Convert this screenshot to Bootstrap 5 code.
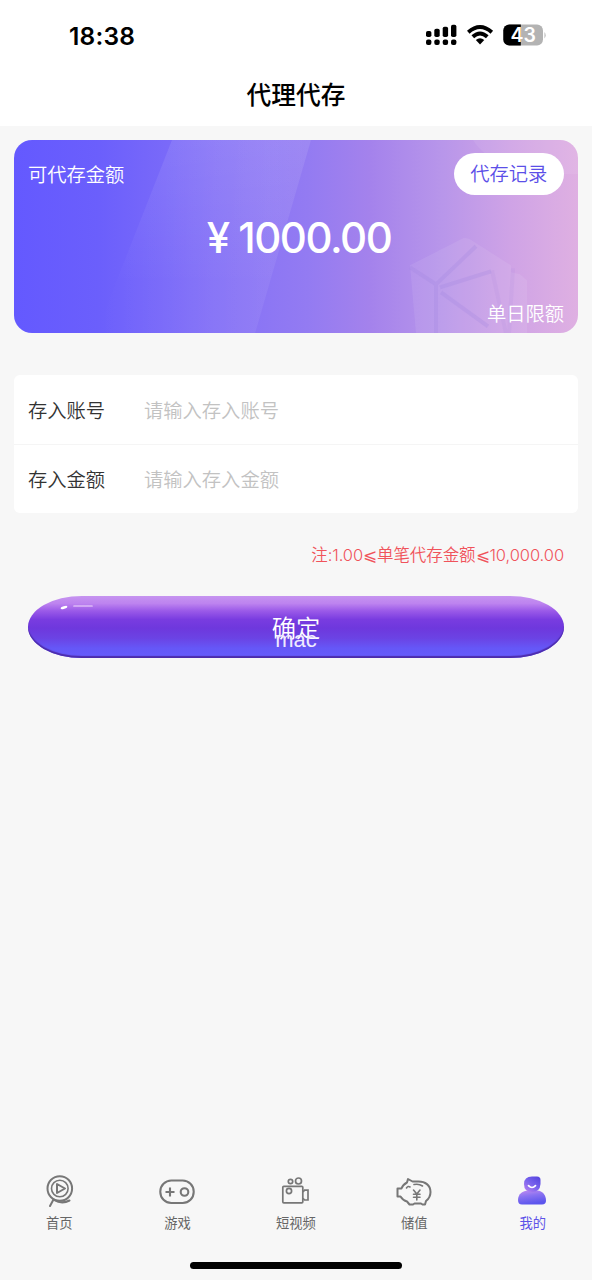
<!DOCTYPE html>
<html lang="zh-CN">
<head>
<meta charset="utf-8">
<meta name="viewport" content="width=device-width, initial-scale=1">
<title>代理代存</title>
<link href="https://cdn.jsdelivr.net/npm/bootstrap@5.3.0/dist/css/bootstrap.min.css" rel="stylesheet">
<style>
body{font-family:Inter,"Noto Sans CJK SC",sans-serif;background:#f7f7f7;color:#333;font-size:19.3px;line-height:28px;font-weight:350}
.screen{height:1280px;overflow:hidden}
.statusbar{height:70px;padding:2px 46px 0 69px}
.statusbar svg{margin-top:-2px}
.clock{font-size:24.5px;font-weight:600;color:#000;letter-spacing:.2px}
.topbar{height:56px;padding-bottom:4px;font-size:24.7px;font-weight:500;color:#000}
.balance{height:193.500px;margin:13.500px 14px 0;border-radius:18px;color:#fff;padding:13.500px 14px 5px;background:linear-gradient(90deg,#6459ff 0%,#6b5ffc 15%,#8370f7 35%,#937bf2 52%,#a482ec 63%,#b896ea 76%,#cfa3e6 88%,#dfb0e2 100%)}
.caption-row{padding-top:2px}
.art{position:absolute;inset:0;width:100%;height:100%}
.records{background:#fff;color:#5b4fe8;width:110.500px;height:41.500px;border-radius:21px;font-size:19.3px;font-weight:350;line-height:43px}
.amount{font-size:42px;line-height:50px;font-weight:500;letter-spacing:-1.5px;padding:0 0 11px 6px}
.fields{margin:42px 14px 0;border-radius:6px;height:138px}
.fields .line{height:69px;padding:2px 14px 0}
.fields .line+.line{border-top:1px solid #f5f5f5}
.fields label{width:116px}
.fields input{font-size:19.3px;font-weight:350;height:40px;background:none;outline:0}
.fields input::placeholder{color:#c2c2c2;opacity:1}
.limit{margin:29px 28px 0;font-size:16.5px;line-height:27px;letter-spacing:-.08px;color:#f0535b}
.submit{margin:27px 28px 0;height:62px;border:0;border-radius:54px/31px;color:#fff;font-size:24.3px;font-weight:350;background:linear-gradient(#c694f0 0%,#bd83ef 12%,#9b5ae8 24%,#793ce0 38%,#6e38dd 52%,#6b43e4 68%,#6557f7 84%,#665dfc 100%);box-shadow:inset 0 -2px 1px #4d2cac}
.submit .word{padding-top:2px}
.shine{position:absolute;left:31px;top:6px}
.brand{position:absolute;left:0;right:0;top:31px;font:22px/26px "Liberation Sans",sans-serif;color:#efeaff}
.tabs{height:120px;padding-top:12px}
.tabs a{font-size:13.3px;line-height:20px;font-weight:400;color:#666;text-decoration:none}
.tabs svg{display:block;margin:0 1px 3px 0}
.tabs a.current{color:#5d52e8}
.homebar{width:212px;height:7px;border-radius:4px;background:#000;position:absolute;left:190px;bottom:11px}
</style>
</head>
<body>
<div class="screen d-flex flex-column position-relative">
<header class="bg-white">
  <div class="statusbar d-flex align-items-center justify-content-between">
    <span class="clock">18:38</span>
    <svg width="122" height="26" viewBox="0 0 122 26">
      <g><rect x="2" y="9" width="5.4" height="6" rx="1.8"/><rect x="10.3" y="6.7" width="5.4" height="8.3" rx="1.8"/><rect x="18.7" y="4.7" width="5.4" height="10.3" rx="1.8"/><rect x="27" y="2.7" width="5.4" height="12.3" rx="1.8"/>
      <rect x="2" y="17.6" width="5.4" height="5.4" rx="2"/><rect x="10.3" y="17.6" width="5.4" height="5.4" rx="2"/><rect x="18.7" y="17.6" width="5.4" height="5.4" rx="2"/><rect x="27" y="17.6" width="5.4" height="5.4" rx="2"/></g>
      <g fill="none" stroke="#000" stroke-width="3.9"><path d="M44.3 10.2Q56 -.2 67.8 10.2"/><path d="M48.8 14.8Q56 8.2 63.3 14.8"/></g>
      <path d="M51.8 18.1Q56 14.6 60.3 18.1L56 22.4Z"/>
      <rect x="79.3" y="2.5" width="39.7" height="21" rx="6" fill="#b3b3b3"/><path d="M85.3 2.5H96.8V23.5H85.3a6 6 0 0 1-6-6V8.500a6 6 0 0 1 6-6Z"/>
      <path d="M120.500 10q2.200 3.200 0 6.500Z" fill="#b3b3b3"/>
      <text x="99.200" y="19.900" text-anchor="middle" font-size="19.500" font-weight="600" fill="#fff">43</text>
    </svg>
  </div>
  <h1 class="topbar m-0 d-flex align-items-center justify-content-center">代理代存</h1>
</header>
<section class="balance position-relative overflow-hidden d-flex flex-column justify-content-between">
  <svg class="art" viewBox="0 0 564 193" preserveAspectRatio="none">
    <defs><linearGradient id="beam" x1="0" y1="0" x2="0" y2="1"><stop stop-color="#fff" stop-opacity=".07"/><stop offset=".75" stop-color="#fff" stop-opacity="0"/></linearGradient>
    <linearGradient id="beam2" x1="0" x2="1"><stop stop-color="#fff" stop-opacity="0"/><stop offset=".8" stop-color="#fff" stop-opacity=".06"/><stop offset="1" stop-color="#fff" stop-opacity=".03"/></linearGradient></defs>
    <path d="M158 0H297L241 193H82Z" fill="url(#beam)"/><path d="M158 0H297L241 193H82Z" fill="url(#beam2)"/>
    <path d="M459 0Q480 35 564 34V0Z" fill="#fff" opacity=".07"/>
    <path d="M396 125L449 98Q454 97 459 101L497 125V132L506 134 513 140V193H402Z" fill="#fff" opacity=".08"/>
    <g fill="none" stroke="#a183e0" stroke-opacity=".25" stroke-width="4"><path d="M396 127L422 144V193M422 144L462 106M426 147L477 131M427 152L474 186"/><path d="M478 130L492 193M499 128L495 193" stroke-opacity=".12"/></g>
  </svg>
  <div class="d-flex justify-content-between align-items-center position-relative"><span class="caption-row">可代存金额</span><button class="btn records p-0 border-0">代存记录</button></div>
  <div class="amount text-center position-relative">¥ 1000.00</div>
  <div class="text-end position-relative mt-2">单日限额</div>
</section>
<form class="fields bg-white">
  <div class="line d-flex align-items-center"><label for="acct">存入账号</label><input id="acct" class="border-0 p-0 flex-grow-1" placeholder="请输入存入账号"></div>
  <div class="line d-flex align-items-center"><label for="sum">存入金额</label><input id="sum" class="border-0 p-0 flex-grow-1" placeholder="请输入存入金额"></div>
</form>
<div class="limit text-end">注:1.00⩽单笔代存金额⩽10,000.00</div>
<button class="submit position-relative p-0"><span class="word d-block">确定</span>
  <svg class="shine" width="38" height="10"><ellipse cx="5" cy="5.500" rx="3.500" ry="1.300" fill="#fff" transform="rotate(-18 5 5.500)"/><path d="M15 4H33" stroke="#dcb9f7" stroke-width="1.700" stroke-linecap="round"/></svg>
  <span class="brand">mac</span>
</button>
<nav class="tabs mt-auto row row-cols-5 g-0 text-center">
  <a class="col d-flex flex-column align-items-center" href="#"><svg width="36" height="38" viewBox="0 0 36 38" fill="none" stroke="#777" stroke-width="2" stroke-linecap="round"><circle cx="18.800" cy="16.500" r="12.300"/><circle cx="18.800" cy="16.500" r="8.300" stroke-width="1.600"/><path d="M16 12V21L24 16.500Z" stroke-linejoin="round"/><path d="M12.500 27.500L9 34M13 28Q21 32.500 28.500 28.500"/></svg>首页</a>
  <a class="col d-flex flex-column align-items-center" href="#"><svg width="36" height="38" viewBox="0 0 36 38" fill="none" stroke="#777" stroke-width="2.100"><rect x="1.300" y="8.500" width="33.400" height="22.500" rx="11"/><path d="M6.500 20H15.500M11 15.500V24.500"/><circle cx="25.500" cy="20" r="3.800"/></svg>游戏</a>
  <a class="col d-flex flex-column align-items-center" href="#"><svg width="36" height="38" viewBox="0 0 36 38" fill="none" stroke="#777" stroke-width="1.700"><rect x="5.800" y="14.300" width="20" height="16.500" rx="1"/><circle cx="13.500" cy="9.500" r="2.200"/><circle cx="21.500" cy="9" r="3"/><circle cx="12" cy="19" r="2.600"/><path d="M26 20L27.500 18.200H31V28H27.500L26 26.300"/></svg>短视频</a>
  <a class="col d-flex flex-column align-items-center" href="#"><svg width="36" height="38" viewBox="0 0 36 38" fill="none" stroke="#777" stroke-width="2" stroke-linejoin="round" stroke-linecap="round"><path d="M12 7L11 10.500Q7 12.500 5.500 16.500H1.500V24.500H4.500Q7 28.500 11 29.500L13.500 32.500H17L18.500 31.500H25L26.500 32.500H29L30 29Q34.500 25.500 34.500 20C34.500 13 29 9.500 22.500 9.500H16.500Z"/><path d="M10.500 16Q12 13.500 14 15M18 12.500Q23 11.500 26.500 14" stroke-width="1.600"/><path d="M17.500 18L20.800 22 24 18M20.800 22V28M17.500 22.300H24M17.500 25.200H24" stroke-width="1.600"/></svg>储值</a>
  <a class="col d-flex flex-column align-items-center current" href="#"><svg width="36" height="38" viewBox="0 0 36 38"><defs><linearGradient id="me" x1="1" y1="0" x2=".2" y2="1"><stop stop-color="#5241dd"/><stop offset=".55" stop-color="#7963ed"/><stop offset="1" stop-color="#b07cf0"/></linearGradient><linearGradient id="bust" x1="0" y1="0" x2=".3" y2="1"><stop stop-color="#c18cf0"/><stop offset=".45" stop-color="#8a72f1"/><stop offset="1" stop-color="#5c55ed"/></linearGradient></defs><path d="M4 28C4 22 9 18.500 14 18.500H23C29 18.500 32 24 32 28.500Q32 32.500 28 32.500H8Q4 32.500 4 28Z" fill="url(#bust)"/><path d="M10 12Q10 4.500 18 4.500H23Q26.500 4.500 26.500 8V12Q26 20 18 20T10 12Z" fill="url(#me)"/><path d="M14.500 13.700Q18 17.300 21.500 13.700" fill="none" stroke="#fff" stroke-width="1.700" stroke-linecap="round"/></svg>我的</a>
</nav>
<div class="homebar"></div>
</div>
<script src="https://cdn.jsdelivr.net/npm/bootstrap@5.3.0/dist/js/bootstrap.bundle.min.js"></script>
</body>
</html>
